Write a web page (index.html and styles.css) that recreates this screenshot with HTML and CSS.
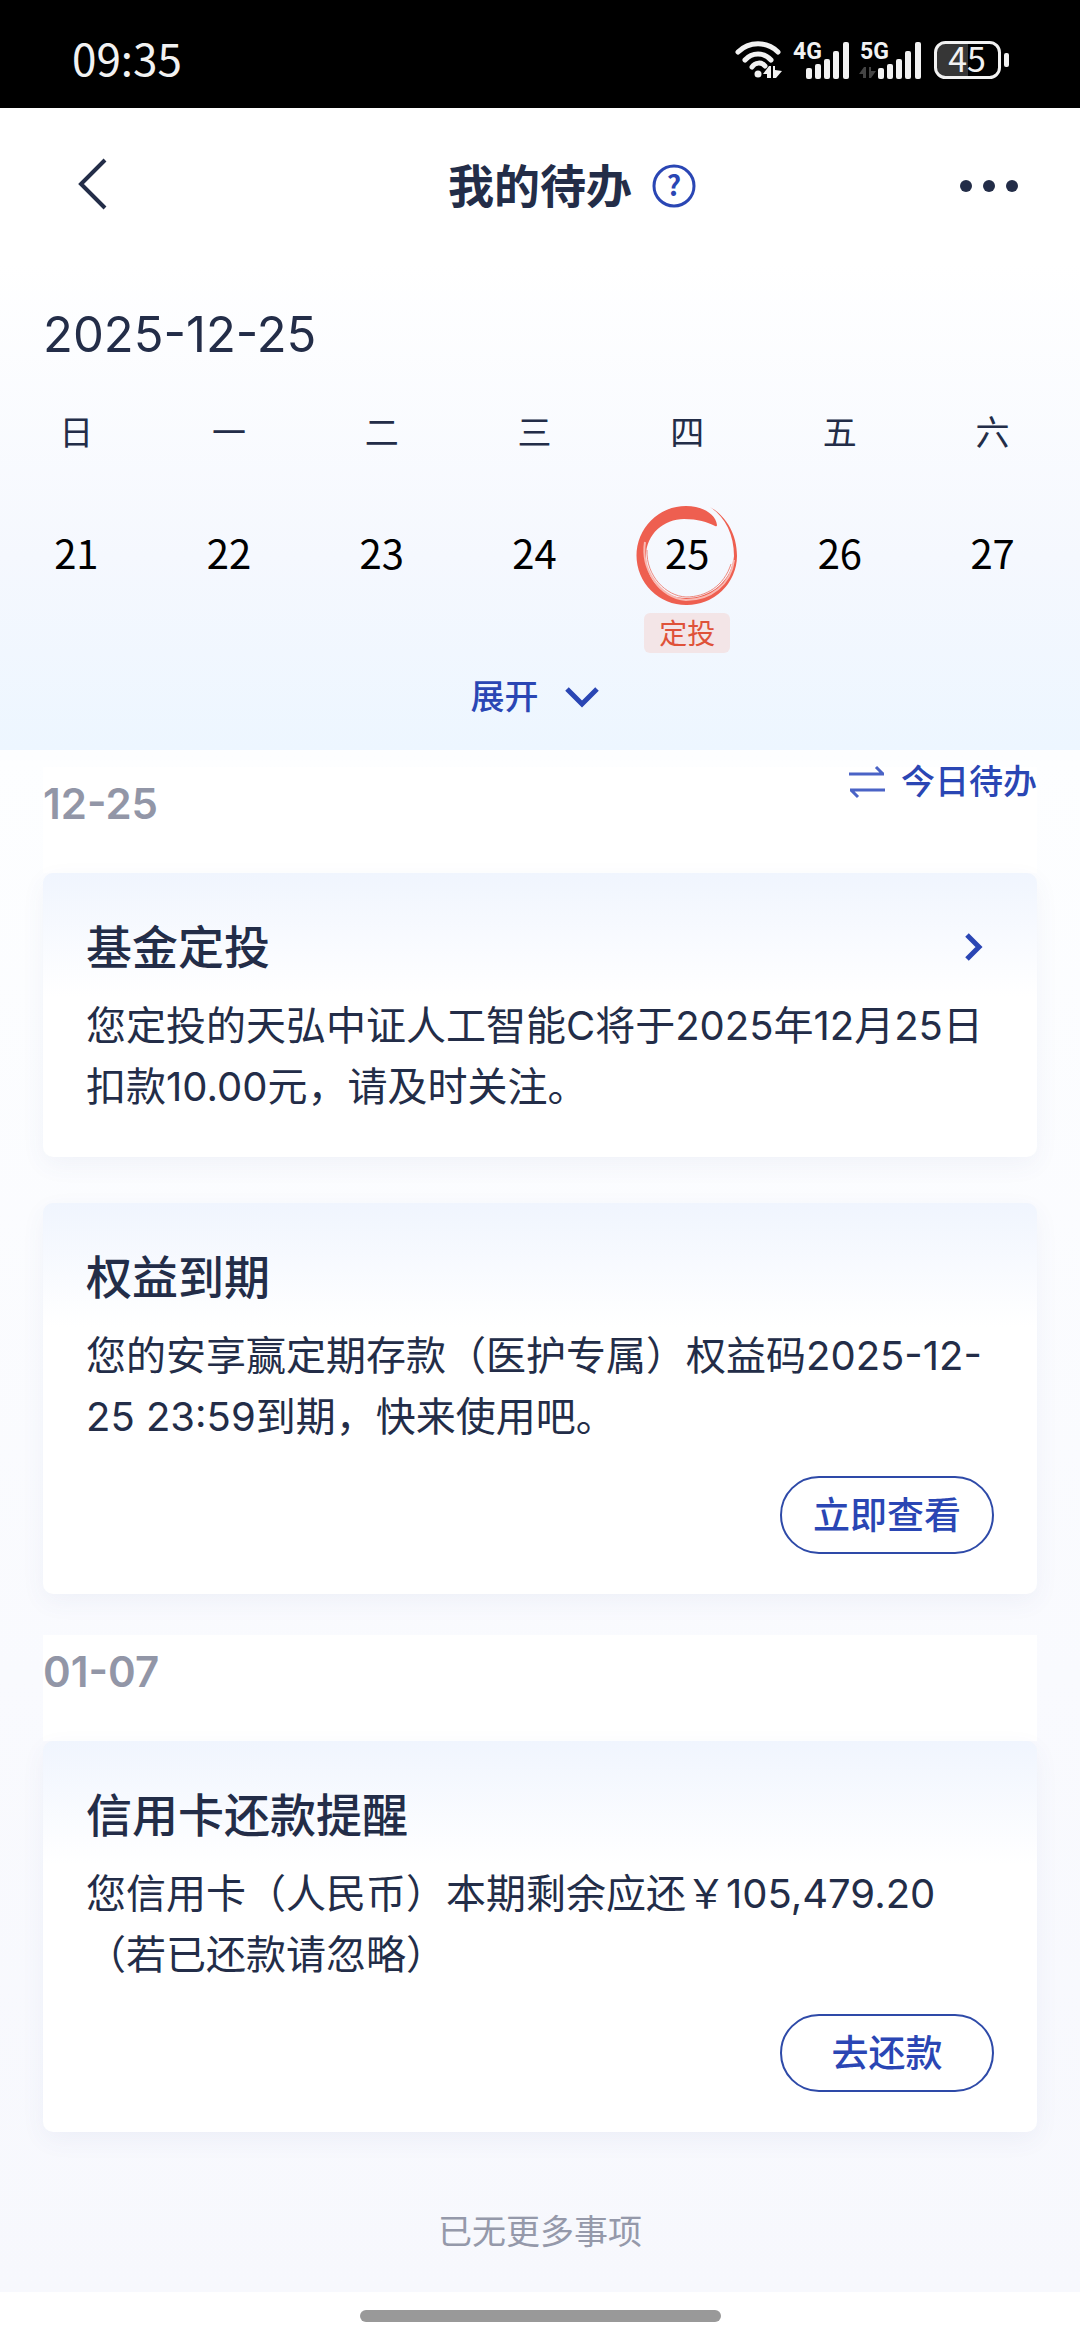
FILE: index.html
```html
<!DOCTYPE html>
<html lang="zh-CN">
<head>
<meta charset="utf-8">
<meta name="viewport" content="width=device-width, initial-scale=1">
<title>我的待办</title>
<link rel="stylesheet" href="styles.css">
</head>
<body>
<div class="status">
  <span class="status-time">09:35</span>
  <div class="status-icons">
    <svg class="wifi" width="48" height="60" viewBox="0 -10 48 60" fill="none" stroke="#f2f2f2" stroke-linecap="round" aria-hidden="true">
      <path d="M3 12C14 1 32 1 43 12" stroke-width="5"/>
      <path d="M10 20C17 12 29 12 36 20" stroke-width="5"/>
      <path d="M17 27C20 22 27 22 30 26" stroke-width="5"/>
      <circle cx="23" cy="34" r="3.500" fill="#f2f2f2" stroke="none"/>
      <path d="M28 34L34 26H36V38H32V34ZM38 26H40V30L47 31L41 38H38Z" fill="#f2f2f2" stroke="none"/>
    </svg>
    <svg class="signal" width="58" height="60" viewBox="0 -10 58 60" fill="#f2f2f2" aria-label="4G">
      <text class="net" x="0" y="19">4G</text>
      <rect x="13" y="28" width="6" height="11" rx="2"/><rect x="22" y="24" width="6" height="15" rx="2"/><rect x="31" y="19" width="6" height="20" rx="2"/><rect x="40" y="11" width="6" height="28" rx="2"/><rect x="50" y="2" width="6" height="37" rx="2"/>
    </svg>
    <svg class="signal" width="64" height="60" viewBox="0 -10 64 60" fill="#f2f2f2" aria-label="5G">
      <text class="net" x="1" y="19">5G</text>
      <path d="M0 34L5 27H7V38H4V34ZM10 27H12V31H17L12 38H10Z" fill="#444"/>
      <rect x="19" y="28" width="6" height="11" rx="2"/><rect x="28" y="24" width="6" height="15" rx="2"/><rect x="37" y="19" width="6" height="20" rx="2"/><rect x="46" y="11" width="6" height="28" rx="2"/><rect x="56" y="2" width="6" height="37" rx="2"/>
    </svg>
    <svg class="battery" width="76" height="60" viewBox="0 -10 76 60" aria-label="45%">
      <path d="M12 3H34V38H12A9 9 0 0 1 3 29V12A9 9 0 0 1 12 3Z" fill="#363636"/>
      <rect x="1.500" y="2.500" width="64" height="35" rx="10" fill="none" stroke="#f2f2f2" stroke-width="3"/>
      <rect x="70" y="13" width="5" height="14" rx="2" fill="#f2f2f2"/>
      <text class="charge" x="33" y="32" text-anchor="middle" fill="#f2f2f2">45</text>
    </svg>
  </div>
</div>

<header class="nav">
  <div class="nav-left">
    <button class="icon-btn" aria-label="返回">
      <svg width="30" height="52" viewBox="0 0 30 52" fill="none" stroke="#232d48" stroke-width="4"><path d="M28 2L4 26L28 50"/></svg>
    </button>
  </div>
  <h1 class="nav-title">我的待办</h1>
  <div class="nav-right">
    <button class="icon-btn" aria-label="帮助">
      <svg width="44" height="44" viewBox="0 0 44 44"><circle cx="22" cy="22" r="20" fill="none" stroke="#2a46b4" stroke-width="3"/><text class="help-mark" x="22" y="32" text-anchor="middle" fill="#2a46b4">?</text></svg>
    </button>
    <button class="icon-btn" aria-label="更多">
      <svg width="58" height="12" viewBox="0 0 58 12" fill="#232d48"><circle cx="6" cy="6" r="6"/><circle cx="29" cy="6" r="6"/><circle cx="52" cy="6" r="6"/></svg>
    </button>
  </div>
</header>

<section class="calendar">
  <h2 class="current-date"><time datetime="2025-12-25">2025-12-25</time></h2>
  <table class="week">
    <thead>
      <tr><th>日</th><th>一</th><th>二</th><th>三</th><th>四</th><th>五</th><th>六</th></tr>
    </thead>
    <tbody>
      <tr>
        <td><button class="day">21</button></td>
        <td><button class="day">22</button></td>
        <td><button class="day">23</button></td>
        <td><button class="day">24</button></td>
        <td>
          <button class="day day-today" aria-current="date">
            <svg class="ring" width="102" height="102" viewBox="0 0 102 102" aria-hidden="true">
              <path d="M81 21C80 10 66 2 50 2A49.500 49.500 0 0 0 50 101A50 49.500 0 0 0 101 52C101 30 90 12 74 3C89 13 98 30 98 52C96 76 76 94 50 94C27 94 10 76 10 52C10 30 28 15 48 15C62 15 71 18 79 22Q81 23 81 21Z" fill="#ee5f50"/>
              <path d="M9 38C5 64 22 93 50 96C75 96 95 80 98 56" fill="none" stroke="#f9b9b2" stroke-width="2"/>
              <path d="M11 46C10 72 30 92 50 93C70 93 88 82 95 60" fill="none" stroke="#ee8a7f" stroke-width="1"/>
            </svg>
            <span class="day-num">25</span>
          </button>
          <span class="tag">定投</span>
        </td>
        <td><button class="day">26</button></td>
        <td><button class="day">27</button></td>
      </tr>
    </tbody>
  </table>
  <button class="expand"><span class="expand-label">展开</span>
    <svg width="34" height="22" viewBox="0 0 34 22" fill="none" stroke="#2a46b4" stroke-width="5"><path d="M2 3L17 18L32 3"/></svg>
  </button>
</section>

<main class="list">
  <button class="toggle">
    <svg width="36" height="34" viewBox="0 0 36 34" fill="none" stroke="#4a63c6" stroke-width="3"><path d="M0 9H35M27 2L34 9M36 25H1M9 32L2 25"/></svg>
    <span class="toggle-label">今日待办</span>
  </button>

  <section class="group">
    <h2 class="group-date">12-25</h2>
    <article class="card">
      <div class="card-head">
        <h3 class="card-title">基金定投</h3>
        <a class="card-link" href="#fund" aria-label="查看基金定投">
          <svg width="18" height="28" viewBox="0 0 18 28" fill="none" stroke="#2a46b4" stroke-width="5"><path d="M2 2L14 14L2 26"/></svg>
        </a>
      </div>
      <p class="card-text">您定投的天弘中证人工智能C将于2025年12月25日扣款10.00元，请及时关注。</p>
    </article>
    <article class="card">
      <div class="card-head"><h3 class="card-title">权益到期</h3></div>
      <p class="card-text">您的安享赢定期存款（医护专属）权益码2025-12-25 23:59到期，快来使用吧。</p>
      <button class="action">立即查看</button>
    </article>
  </section>

  <section class="group">
    <h2 class="group-date">01-07</h2>
    <article class="card">
      <div class="card-head"><h3 class="card-title">信用卡还款提醒</h3></div>
      <p class="card-text">您信用卡（人民币）本期剩余应还￥105,479.20（若已还款请忽略）</p>
      <button class="action">去还款</button>
    </article>
  </section>

  <p class="end">已无更多事项</p>
</main>
<div class="home-bar"><span class="home-pill"></span></div>
</body>
</html>
```

FILE: styles.css
```css
* {
  box-sizing: border-box;
  margin: 0;
  padding: 0;
}

body {
  display: flex;
  flex-direction: column;
  min-height: 100vh;
  background: #fff;
  color: #232d48;
  font-family: "Noto Sans CJK SC", "Noto Sans", sans-serif;
  text-spacing-trim: space-all;
}

button {
  border: 0;
  background: none;
  color: inherit;
  font: inherit;
}

svg {
  display: block;
  overflow: visible;
}

/* Status bar */
.status {
  display: flex;
  justify-content: space-between;
  align-items: center;
  height: 108px;
  padding: 12px 70px 0 72px;
  background: #000;
  color: #f2f2f2;
}

.status-time {
  padding-bottom: 6px;
  font-size: 44px;
  line-height: 64px;
}

.status-icons {
  display: flex;
  align-items: center;
}

.wifi {
  margin-right: 10px;
}

.signal {
  margin-right: 8px;
}

.signal + .battery {
  margin-left: 3px;
}

.net {
  font: bold 23px "Roboto", sans-serif;
}

.charge {
  font-size: 34px;
}

/* Navigation */
.nav {
  display: grid;
  grid-template-columns: 1fr auto 1fr;
  align-items: center;
  height: 156px;
  padding: 0 62px;
}

.nav-title {
  padding-bottom: 6px;
  font-size: 46px;
  font-weight: 700;
  line-height: 60px;
}

.nav-left {
  padding-left: 15px;
}

.nav-right {
  display: flex;
  justify-content: space-between;
  align-items: center;
  padding-left: 20px;
}

.help-mark {
  font-size: 28px;
  font-weight: 700;
}

/* Calendar */
.calendar {
  padding: 36px 11px 18px 0;
  background: linear-gradient(#fff, #f5f8fe 60%, #edf6ff);
}

.current-date {
  padding-left: 43px;
  font: 400 49px/70px "Inter", "Noto Sans CJK SC", sans-serif;
}

.week {
  width: 100%;
  margin-top: 32px;
  border-collapse: collapse;
  table-layout: fixed;
}

.week th {
  padding-bottom: 4px;
  font-size: 34px;
  font-weight: 400;
  line-height: 58px;
}

.week td {
  height: 189px;
  padding-top: 40px;
  vertical-align: top;
  text-align: center;
}

.day {
  position: relative;
  display: block;
  width: 102px;
  height: 102px;
  margin: 0 auto;
  padding-bottom: 6px;
  color: #000;
  font-size: 40px;
  line-height: 96px;
}

.ring {
  position: absolute;
  inset: 0;
}

.day-num {
  position: relative;
}

.tag {
  display: block;
  width: 86px;
  margin: 7px auto 0;
  padding-bottom: 2px;
  border-radius: 6px;
  background: #f3e5e7;
  color: #df5239;
  font-size: 28px;
  line-height: 38px;
}

.expand {
  display: flex;
  align-items: center;
  gap: 26px;
  margin: 9px auto 0;
  color: #2a46b4;
  font-size: 34px;
  font-weight: 500;
  line-height: 66px;
}

.expand-label,
.toggle-label {
  padding-bottom: 4px;
}

/* Task list */
.list {
  position: relative;
  flex: 1;
  padding: 17px 43px 29px;
  background: linear-gradient(#fdfeff, #f9fafe 60%, #f7f8fd);
}

.toggle {
  position: absolute;
  top: 0;
  right: 43px;
  display: flex;
  align-items: center;
  gap: 16px;
  color: #2a46b4;
  font-size: 34px;
  font-weight: 500;
  line-height: 60px;
}

.group {
  margin-bottom: 41px;
}

.group-date {
  padding-bottom: 32px;
  background: #fff;
  color: #9296a7;
  font: 600 42px/74px "Inter", "Noto Sans CJK SC", sans-serif;
}

.card {
  padding: 43px 43px 40px;
  border-radius: 10px;
  background: #fff linear-gradient(#f0f5fe, #fff) no-repeat 0 0 / 100% 124px;
  box-shadow: 0 8px 24px rgba(60, 80, 160, 0.06);
}

.card + .card {
  margin-top: 46px;
}

.card-head {
  display: flex;
  justify-content: space-between;
  align-items: center;
}

.card-title {
  padding-bottom: 6px;
  font-size: 46px;
  font-weight: 500;
  line-height: 56px;
}

.card-link {
  padding-right: 11px;
}

.card-text {
  margin-top: 17px;
  font: 400 40px/61px "Inter", "Noto Sans CJK SC", sans-serif;
}

.action {
  display: block;
  width: 214px;
  height: 78px;
  margin: 29px 0 0 auto;
  padding-bottom: 4px;
  border: 2px solid #2e4aa8;
  border-radius: 39px;
  color: #2a46b4;
  font-size: 37px;
  font-weight: 500;
  line-height: 70px;
}

.end {
  padding: 27px 0 2px;
  color: #9599aa;
  font-size: 34px;
  line-height: 60px;
  text-align: center;
}

/* Gesture area */
.home-bar {
  display: flex;
  justify-content: center;
  padding: 18px 0;
  background: #fff;
}

.home-pill {
  width: 361px;
  height: 12px;
  border-radius: 6px;
  background: #999;
}
```
